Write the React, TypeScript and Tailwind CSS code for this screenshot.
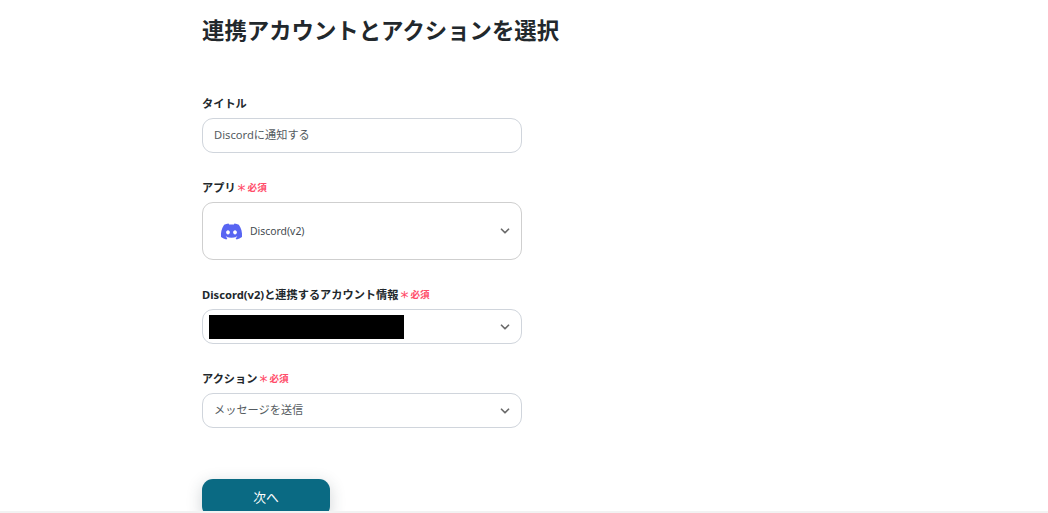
import { ReactNode } from "react";
import { FaDiscord } from "react-icons/fa6";
import { ChevronDown } from "lucide-react";

const fontStack = `"Noto Sans", "Noto Sans CJK JP", sans-serif`;

function Required() {
  return (
    <span className="ml-[2px] inline-flex items-center text-[#ff4d6a]">
      <span className="mt-[6px] font-['DejaVu_Sans'] text-[16px] leading-none font-normal">*</span>
      <span className="ml-[2px] text-[9.6px] leading-none font-bold">必須</span>
    </span>
  );
}

function Label({ children, required }: { children: ReactNode; required?: boolean }) {
  return (
    <div className="flex h-[18px] items-center pt-[1px] text-[11.2px] leading-[18px] font-bold text-[#22282c]">
      {children}
      {required ? <Required /> : null}
    </div>
  );
}

function Chevron() {
  return <ChevronDown className="absolute top-1/2 right-[9px] -translate-y-1/2 text-[#6b6b6b]" size={14} strokeWidth={3} />;
}

export default function App() {
  return (
    <div className="flex h-[513px] w-[1048px] flex-col overflow-hidden bg-white" style={{ fontFamily: fontStack }}>
      <main className="min-h-0 flex-1 overflow-hidden pl-[202px]">
        <div className="w-[320px]">
          <h1 className="mt-[15px] h-[32px] text-[22.4px] leading-[32px] font-bold whitespace-nowrap text-[#22282c]">
            連携アカウントとアクションを選択
          </h1>

          <div className="mt-[47px]">
            <Label>タイトル</Label>
            <div className="mt-[6px] flex h-[35px] items-center rounded-[11px] border border-[#d0d5dc] pl-[11px] text-[11.2px] text-[#555c61]">
              Discordに通知する
            </div>
          </div>

          <div className="mt-[25px]">
            <Label required>アプリ</Label>
            <div className="relative mt-[6px] flex h-[58px] items-center rounded-[11px] border border-[#cfcfcf] pl-[17px] text-[10.4px] text-[#444b50]">
              <FaDiscord className="text-[#5865f2]" size={23} />
              <span className="ml-[7px] pt-[1px]">Discord(v2)</span>
              <Chevron />
            </div>
          </div>

          <div className="mt-[25px]">
            <Label required>Discord(v2)と連携するアカウント情報</Label>
            <div className="relative mt-[6px] flex h-[35px] items-center rounded-[11px] border border-[#d0d5dc] pl-[6px]">
              <div className="h-[24px] w-[195px] bg-black" />
              <Chevron />
            </div>
          </div>

          <div className="mt-[25px]">
            <Label required>アクション</Label>
            <div className="relative mt-[6px] flex h-[35px] items-center rounded-[11px] border border-[#d0d5dc] pl-[11px] text-[11.2px] text-[#555c61]">
              メッセージを送信
              <Chevron />
            </div>
          </div>

          <button className="mt-[51px] flex h-[38px] w-[128px] items-center justify-center rounded-[11px] bg-[#0a6a83] text-[12.8px] text-white shadow-[0_4px_16px_rgba(40,60,70,0.22)]">
            次へ
          </button>
        </div>
      </main>
      <div className="h-[2px] shrink-0 bg-[#f2f2f2]" />
    </div>
  );
}
